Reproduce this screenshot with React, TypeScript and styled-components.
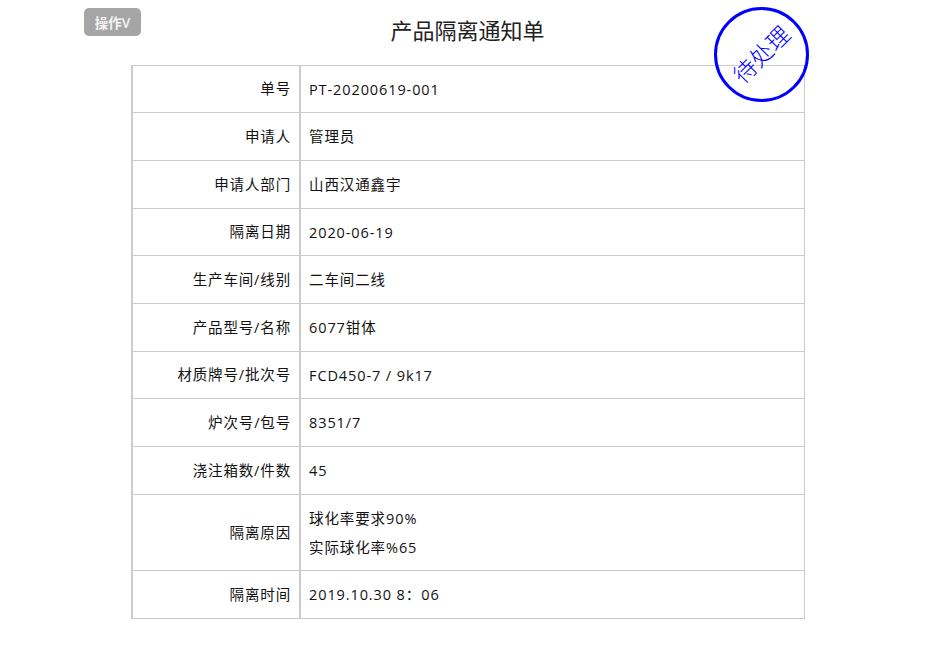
import React from 'react';
import styled, { createGlobalStyle } from 'styled-components';

const rows: { label: string; lines: string[] }[] = [
  { label: '单号', lines: ['PT-20200619-001'] },
  { label: '申请人', lines: ['管理员'] },
  { label: '申请人部门', lines: ['山西汉通鑫宇'] },
  { label: '隔离日期', lines: ['2020-06-19'] },
  { label: '生产车间/线别', lines: ['二车间二线'] },
  { label: '产品型号/名称', lines: ['6077钳体'] },
  { label: '材质牌号/批次号', lines: ['FCD450-7 / 9k17'] },
  { label: '炉次号/包号', lines: ['8351/7'] },
  { label: '浇注箱数/件数', lines: ['45'] },
  { label: '隔离原因', lines: ['球化率要求90%', '实际球化率%65'] },
  { label: '隔离时间', lines: ['2019.10.30 8：06'] },
];

const App = () => (
  <Page>
    <GlobalStyle />
    <Header>
      <ActionButton>操作V</ActionButton>
      <Title>产品隔离通知单</Title>
    </Header>
    <Sheet>
      <Stamp>
        <StampText>待处理</StampText>
      </Stamp>
      <Table>
        <tbody>
          {rows.map((row) => (
            <tr key={row.label}>
              <LabelCell>{row.label}</LabelCell>
              <ValueCell>
                {row.lines.map((line) => (
                  <ValueLine key={line}>{line}</ValueLine>
                ))}
              </ValueCell>
            </tr>
          ))}
        </tbody>
      </Table>
    </Sheet>
  </Page>
);

export default App;

const GlobalStyle = createGlobalStyle`
  html, body {
    margin: 0;
    padding: 0;
    background: #fff;
  }
  body {
    font-family: "Open Sans", "Noto Sans CJK SC", sans-serif;
    color: #111;
  }
`;

const Page = styled.div`
  width: 930px;
  height: 646px;
  padding: 8px 0 0 84px;
  box-sizing: border-box;
  overflow: hidden;
`;

const Header = styled.header`
  width: 767px;
  height: 56.6px;
  display: grid;
  grid-template-columns: 57px 1fr 57px;
  align-items: start;
`;

const ActionButton = styled.button`
  width: 57px;
  height: 28px;
  padding: 0;
  border: 0;
  border-radius: 5px;
  background: #a5a5a5;
  color: #f4f4f4;
  font-family: inherit;
  font-size: 13.5px;
  font-weight: 600;
`;

const Title = styled.h1`
  margin: 6px 0 0;
  font-size: 22px;
  font-weight: 400;
  line-height: 32px;
  text-align: center;
  color: #222;
`;

const Sheet = styled.div`
  position: relative;
  width: 674px;
  margin-left: 47px;
`;

const Stamp = styled.div`
  position: absolute;
  top: -58px;
  right: -4px;
  width: 95px;
  height: 95px;
  box-sizing: border-box;
  border: 3px solid #0000ff;
  border-radius: 50%;
  display: flex;
  align-items: center;
  justify-content: center;
`;

const StampText = styled.span`
  transform: rotate(-45deg);
  color: #0000ff;
  font-size: 23px;
  font-weight: 300;
  line-height: 1;
  white-space: nowrap;
`;

const Table = styled.table`
  width: 674px;
  table-layout: fixed;
  border-collapse: separate;
  border-spacing: 0;
  border-top: 1px solid #ccc;
  border-left: 2px solid #ccc;
  border-right: 1px solid #ccc;
  font-size: 14.5px;

  td {
    border-bottom: 1px solid #ccc;
    box-sizing: border-box;
    height: 47.67px;
  }
`;

const LabelCell = styled.td`
  width: 168px;
  padding: 0 8px 2px 0;
  border-right: 2px solid #ccc;
  letter-spacing: 0.85px;
  text-align: right;
`;

const ValueCell = styled.td`
  padding: 9px 8px 8.4px;
  letter-spacing: 0.9px;
`;

const ValueLine = styled.div`
  line-height: 29px;
`;
